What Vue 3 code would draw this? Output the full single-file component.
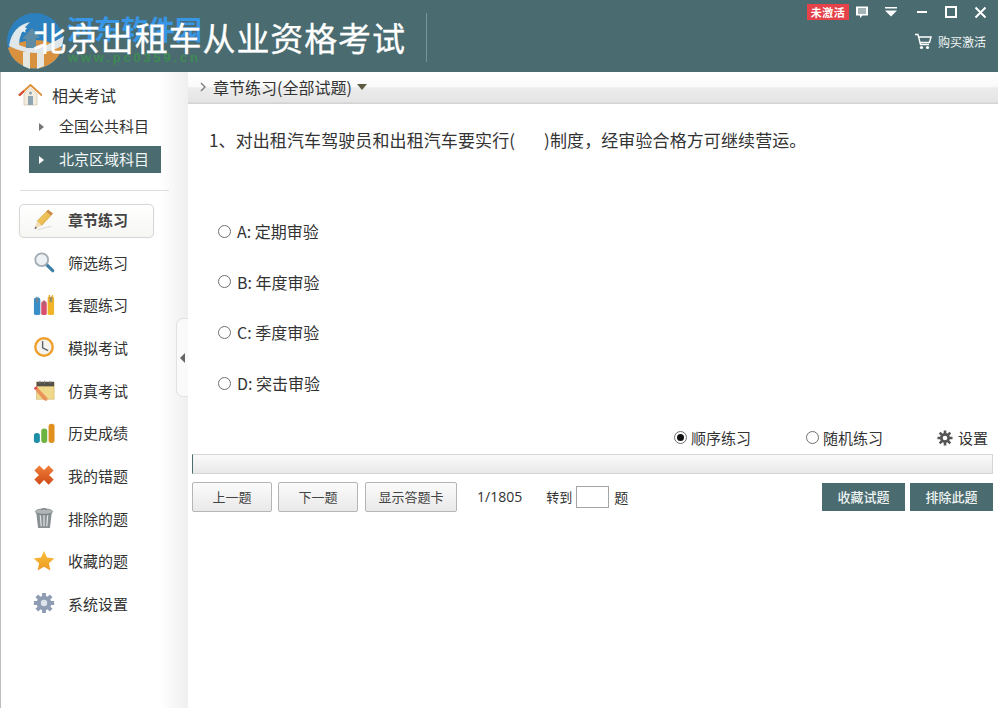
<script setup>
const subjects = [
  { name: '全国公共科目', active: false },
  { name: '北京区域科目', active: true }
]
const navItems = [
  { name: '章节练习', icon: 'pencil', active: true },
  { name: '筛选练习', icon: 'search' },
  { name: '套题练习', icon: 'books' },
  { name: '模拟考试', icon: 'clock' },
  { name: '仿真考试', icon: 'note' },
  { name: '历史成绩', icon: 'bars' },
  { name: '我的错题', icon: 'cross' },
  { name: '排除的题', icon: 'trash' },
  { name: '收藏的题', icon: 'star' },
  { name: '系统设置', icon: 'gear' }
]
const options = ['A: 定期审验', 'B: 年度审验', 'C: 季度审验', 'D: 突击审验']
</script>

<template>
  <div class="app">
    <header class="header">
      <div class="watermark">
        <svg class="wm-logo" width="58" height="58" viewBox="0 0 58 58">
          <circle cx="29" cy="29" r="28" fill="#2b80bd" />
          <path d="M2 36 Q29 20 56 36 A28 28 0 0 1 2 36Z" fill="#d8923f" />
          <path d="M17 40l7-1v18l-7-3zM31 38h7v16l-7 3z" fill="#e6e6e0" />
          <path d="M3 34 Q6 14 24 10 Q13 20 13 33 Q30 42 58 24 L56 34 Q30 48 3 34Z" fill="#dfe7ea" />
          <path d="M16 27 L26 16 L34 26 L30 26 L30 36 L20 36 L20 27Z" fill="#5f8ba3" />
          <path d="M17 13l1.500 2.500 2.700.5-2 2 .4 2.800-2.600-1.300-2.600 1.300.4-2.800-2-2 2.700-.5z" fill="#e8eef2" />
        </svg>
        <span class="wm-text">河东软件园</span>
        <span class="wm-url">www.pc0359.cn</span>
      </div>
      <h1 class="title">北京出租车从业资格考试</h1>
      <div class="title-sep"></div>
      <div class="spacer"></div>
      <div class="controls">
        <div class="ctrl-top">
          <span class="badge">未激活</span>
          <svg class="ctl c-msg" width="14" height="14" viewBox="0 0 14 14"><path d="M1 1.500h12v9H7.500L5 13v-2.500H1z" fill="#fff" /><path d="M3 4h8M3 6h8M3 8h8" stroke="#4a6b6f" stroke-width="1" /></svg>
          <svg class="ctl c-menu" width="14" height="12" viewBox="0 0 14 12"><path d="M1 1h12v1.500H1zM1 4.500h12L7 10.500z" fill="#fff" /></svg>
          <svg class="ctl c-min" width="12" height="12" viewBox="0 0 12 12"><path d="M1 6h10" stroke="#fff" stroke-width="2" /></svg>
          <svg class="ctl c-max" width="12" height="12" viewBox="0 0 12 12"><rect x="1" y="1" width="10" height="10" fill="none" stroke="#fff" stroke-width="2" /></svg>
          <svg class="ctl c-close" width="13" height="13" viewBox="0 0 13 13"><path d="M1.500 1.500l10 10M11.500 1.500l-10 10" stroke="#fff" stroke-width="2" /></svg>
        </div>
        <div class="buy">
          <svg width="18" height="17" viewBox="0 0 18 17"><path d="M1 1.500h3l2.500 10h8.500" fill="none" stroke="#fff" stroke-width="1.400" /><path d="M5 4h12l-1.500 5.500H6.200" fill="none" stroke="#fff" stroke-width="1.400" /><circle cx="7.500" cy="14.500" r="1.600" fill="#fff" /><circle cx="13.500" cy="14.500" r="1.600" fill="#fff" /></svg>
          <span>购买激活</span>
        </div>
      </div>
    </header>

    <div class="body">
      <aside class="sidebar">
        <div class="side-head">
          <svg width="24" height="22" viewBox="0 0 24 22">
            <path d="M6 10v11h13V10L12.500 4z" fill="#f3ede0" stroke="#c9b99a" stroke-width=".6" />
            <rect x="10" y="12" width="5" height="9" fill="#8fa5b3" />
            <circle cx="12.500" cy="9" r="1.500" fill="#8fa5b3" />
            <path d="M1 11.500L12.500 1 24 11.500" fill="none" stroke="#e0903a" stroke-width="2" />
            <path d="M1 11.500L6 7" fill="none" stroke="#d6452e" stroke-width="2" />
          </svg>
          <span>相关考试</span>
        </div>
        <ul class="subjects">
          <li v-for="s in subjects" :key="s.name" class="subject" :class="{ active: s.active }">
            <i class="tri"></i><span>{{ s.name }}</span>
          </li>
        </ul>
        <div class="side-sep"></div>
        <nav class="nav">
          <div v-for="n in navItems" :key="n.name" class="nav-item" :class="{ active: n.active }">
            <svg class="nav-icon" width="22" height="22" viewBox="0 0 24 24">
              <template v-if="n.icon === 'pencil'">
                <defs><linearGradient id="gp" x1="0" y1="0" x2="1" y2="1"><stop offset="0" stop-color="#f8d672" /><stop offset="1" stop-color="#e2a93a" /></linearGradient></defs>
                <path d="M4.500 13L16.500 1l5 4L9.500 18z" fill="url(#gp)" stroke="#c99a35" stroke-width=".6" />
                <path d="M16.500 1l5 4-2 2-5-4z" fill="#c98a50" />
                <path d="M4.500 13l5 5-8 4z" fill="#f2dfb8" />
                <path d="M1.500 22l2.800-1.400-1.400-1.400z" fill="#555" />
                <path d="M5 23q8-3 15-4" fill="none" stroke="#ddd" stroke-width="1.200" />
              </template>
              <template v-else-if="n.icon === 'search'">
                <path d="M14.500 14.500l7 7" stroke="#3d7fa8" stroke-width="3.500" stroke-linecap="round" />
                <circle cx="9.500" cy="9.500" r="7" fill="#eef1f3" stroke="#a3acb2" stroke-width="2" />
              </template>
              <template v-else-if="n.icon === 'books'">
                <path d="M1 6q0-2 2-2l0-1h1v1h1v-1h1v1q2 0 2 2v16q-3 2-7 0z" fill="#3a8fc9" />
                <path d="M9 10q0-2 2-2v-1h2v1q2 0 2 2v12q-3 2-6 0z" fill="#d9506e" />
                <path d="M16 5q0-2 1-2v-2h1.500v2h2V1H22v2q1 0 1 2v17q-3 2-7 0z" fill="#f0b429" />
                <path d="M3 4h3v5H3zM11 8h2v4h-2zM18 3h3v6h-3z" fill="#7d7d7d" opacity=".7" />
              </template>
              <template v-else-if="n.icon === 'clock'">
                <circle cx="12" cy="12" r="9.500" fill="#f6f3ee" stroke="#eea02c" stroke-width="2.600" />
                <path d="M10.500 5.500v7.500l6 3" fill="none" stroke="#5a6470" stroke-width="1.500" />
              </template>
              <template v-else-if="n.icon === 'note'">
                <rect x="4" y="4" width="19" height="18" fill="#f0d98a" stroke="#c9a95a" stroke-width=".6" />
                <rect x="4" y="3" width="19" height="5" fill="#55504a" />
                <path d="M7 2h1v3H7zM12 2h1v3h-1zM18 2h1v3h-1z" fill="#8a857c" />
                <path d="M1 10l2.500-2L16 21l-1 3-3.500-1z" fill="#e9935a" />
                <path d="M1 10l2.500-2 1.500 1.600-2.500 2z" fill="#d9405e" />
              </template>
              <template v-else-if="n.icon === 'bars'">
                <rect x="1" y="12" width="6.500" height="11" rx="3" fill="#1f8fa8" />
                <rect x="9" y="7" width="6.500" height="16" rx="3" fill="#6cb33f" />
                <rect x="17" y="2" width="6.500" height="21" rx="3" fill="#e0901f" />
              </template>
              <template v-else-if="n.icon === 'cross'">
                <defs><linearGradient id="gx" x1="0" y1="0" x2="0" y2="1"><stop offset="0" stop-color="#f08038" /><stop offset="1" stop-color="#cf4a18" /></linearGradient></defs>
                <path d="M7 1.500l5 5 5-5 5.500 5.500-5 5 5 5-5.500 5.500-5-5-5 5L1.500 17l5-5-5-5z" fill="url(#gx)" />
              </template>
              <template v-else-if="n.icon === 'trash'">
                <path d="M3.500 6h17l-2 17H5.500z" fill="#8a9194" />
                <path d="M8 9l1 12M12 9v12M16 9l-1 12" stroke="#e4e6e6" stroke-width="1.300" />
                <ellipse cx="12" cy="5" rx="9.500" ry="3" fill="#b0b5b7" stroke="#6f7577" stroke-width=".7" />
                <path d="M9 3q3-3 6 0" fill="none" stroke="#6f7577" stroke-width="1" />
              </template>
              <template v-else-if="n.icon === 'star'">
                <defs><linearGradient id="gs" x1="0" y1="0" x2="0" y2="1"><stop offset="0" stop-color="#f8c03a" /><stop offset="1" stop-color="#ee9a20" /></linearGradient></defs>
                <path d="M12 1l3.300 7.300 8 .9-6 5.300 1.700 7.900L12 18.400 5 22.400l1.700-7.900-6-5.300 8-.9z" fill="url(#gs)" />
              </template>
              <template v-else-if="n.icon === 'gear'">
                <circle cx="12" cy="12" r="8" fill="#8e9db3" />
                <path d="M12 1v22M1 12h22M4.200 4.200l15.600 15.600M19.800 4.200L4.200 19.800" stroke="#8e9db3" stroke-width="4.200" />
                <circle cx="12" cy="12" r="3.500" fill="#dfe4ea" />
              </template>
            </svg>
            <span>{{ n.name }}</span>
          </div>
        </nav>
      </aside>

      <main class="main">
        <div class="collapse"><i></i></div>
        <div class="crumb">
          <svg width="8" height="10" viewBox="0 0 8 10"><path d="M2 1l4 4-4 4" fill="none" stroke="#777" stroke-width="1.300" /></svg>
          <span>章节练习(全部试题)</span>
          <i class="crumb-tri"></i>
        </div>
        <div class="content">
          <p class="question">1、对出租汽车驾驶员和出租汽车要实行(<span class="blank"></span>)制度，经审验合格方可继续营运。</p>
          <div class="options">
            <label v-for="o in options" :key="o" class="option"><i class="radio"></i>{{ o }}</label>
          </div>
          <div class="mode">
            <span class="mode-item m-seq"><i class="radio on"></i>顺序练习</span>
            <span class="mode-item m-rand"><i class="radio"></i>随机练习</span>
            <span class="mode-item m-set">
              <svg width="16" height="16" viewBox="0 0 16 16"><circle cx="8" cy="8" r="5" fill="#555" /><path d="M8 .5v15M.5 8h15M2.700 2.700l10.600 10.600M13.300 2.700L2.700 13.300" stroke="#555" stroke-width="2.600" /><circle cx="8" cy="8" r="2.300" fill="#fff" /></svg>
              设置
            </span>
          </div>
          <div class="progress"></div>
          <div class="actions">
            <button class="btn b-nav">上一题</button>
            <button class="btn b-nav">下一题</button>
            <button class="btn b-card">显示答题卡</button>
            <span class="count">1/1805</span>
            <span class="goto">转到</span>
            <input class="goto-input" />
            <span class="goto-end">题</span>
            <div class="spacer"></div>
            <button class="dark">收藏试题</button>
            <button class="dark">排除此题</button>
          </div>
        </div>
      </main>
    </div>
  </div>
</template>

<style>
html, body { margin: 0; padding: 0; background: #fff; overflow: hidden; }
</style>

<style scoped>
.app {
  width: 998px;
  height: 708px;
  display: flex;
  flex-direction: column;
  font-family: "Noto Sans CJK SC", "Open Sans", sans-serif;
  color: #333;
  background: #fff;
  overflow: hidden;
}
i { display: block; font-style: normal; }
.spacer { flex: 1; }

.header {
  height: 72px;
  flex: none;
  background: #4a6b6f;
  display: flex;
  position: relative;
  overflow: hidden;
}
.title {
  margin: 0 0 0 33px;
  padding-top: 14px;
  font-size: 33px;
  line-height: 46px;
  font-weight: 400;
  letter-spacing: .9px;
  color: #fff;
  white-space: nowrap;
  position: relative;
  -webkit-text-stroke: .3px #fff;
}
.title-sep {
  width: 1px;
  height: 49px;
  margin: 13px 0 0 20px;
  background: #7b9497;
}
.watermark { position: absolute; left: 0; top: 0; width: 210px; height: 72px; }
.wm-logo { position: absolute; left: 6px; top: 12px; }
.wm-text {
  position: absolute;
  left: 67px;
  top: 11px;
  font-size: 27px;
  line-height: 36px;
  font-weight: 700;
  color: #3796e6;
  white-space: nowrap;
}
.wm-url {
  position: absolute;
  left: 68px;
  top: 51px;
  font-family: "Liberation Sans", sans-serif;
  font-size: 13px;
  line-height: 14px;
  font-weight: 700;
  letter-spacing: 2.8px;
  color: #3f8a55;
  white-space: nowrap;
}
.controls { width: 192px; display: flex; flex-direction: column; flex: none; }
.ctrl-top { display: flex; align-items: center; height: 24px; }
.badge {
  width: 42px;
  height: 16px;
  margin-left: 1px;
  background: #e5424a;
  color: #fff;
  font-size: 11px;
  font-weight: 700;
  line-height: 16px;
  text-align: center;
  letter-spacing: .5px;
}
.ctl { flex: none; }
.c-msg { margin-left: 6px; }
.c-menu { margin-left: 15px; }
.c-min { margin-left: 18px; }
.c-max { margin-left: 17px; }
.c-close { margin-left: 17px; }
.buy {
  display: flex;
  align-items: center;
  margin: 8px 0 0 108px;
  height: 18px;
  gap: 6px;
  color: #f2f6f6;
  font-size: 12px;
  white-space: nowrap;
}

.body { flex: 1; display: flex; min-height: 0; }
.sidebar {
  width: 188px;
  flex: none;
  box-sizing: border-box;
  border-left: 1px solid #bdbdbd;
  background: linear-gradient(to right, #fff 85%, #efefef 100%);
  padding-top: 11px;
}
.side-head {
  display: flex;
  align-items: center;
  height: 24px;
  padding-left: 17px;
  gap: 10px;
  font-size: 16px;
  color: #333;
}
.subjects { list-style: none; margin: 6px 0 0 28px; padding: 0; width: 132px; }
.subject {
  height: 27px;
  display: flex;
  align-items: center;
  font-size: 15px;
  line-height: 27px;
  color: #333;
  margin-bottom: 6px;
  white-space: nowrap;
}
.subject span { position: relative; top: -1px; }
.subject.active { background: #4a6b6f; color: #f4f7f7; }
.tri {
  width: 0;
  height: 0;
  margin: 0 15px 0 10px;
  border-left: 5px solid #777;
  border-top: 4.500px solid transparent;
  border-bottom: 4.500px solid transparent;
}
.subject.active .tri { border-left-color: #fff; }
.side-sep { height: 1px; background: #ddd; margin: 17px 19px 0 19px; }
.nav { margin: 13px 0 0 18px; }
.nav-item {
  box-sizing: border-box;
  width: 135px;
  height: 34px;
  margin-bottom: 8.670px;
  display: flex;
  align-items: center;
  padding: 0 0 3px 13px;
  gap: 13px;
  font-size: 15px;
  color: #333;
  border: 1px solid transparent;
  white-space: nowrap;
}
.nav-item.active {
  border-color: #d5d8d5;
  border-radius: 5px;
  background: linear-gradient(#fff, #f6f6f3);
  box-shadow: 0 0 1px #ddd;
  font-weight: 700;
  color: #444;
}
.nav-icon { flex: none; width: 22px; height: 22px; }

.main { flex: 1; min-width: 0; position: relative; display: flex; flex-direction: column; }
.collapse {
  position: absolute;
  left: -12px;
  top: 246px;
  width: 12px;
  height: 79px;
  box-sizing: border-box;
  border: 1px solid #e2e2e2;
  border-right: none;
  border-radius: 7px 0 0 7px;
  background: #fafafa;
  display: flex;
  align-items: center;
  justify-content: center;
}
.collapse i {
  width: 0;
  height: 0;
  border-right: 5px solid #666;
  border-top: 5px solid transparent;
  border-bottom: 5px solid transparent;
}
.crumb {
  height: 32px;
  flex: none;
  box-sizing: border-box;
  display: flex;
  align-items: center;
  padding: 0 0 3px 11px;
  gap: 6px;
  font-size: 16px;
  color: #333;
  background: linear-gradient(#fff 0, #fafafa 45%, #ececec 50%, #e5e5e5 92%, #cfcfcf 100%);
}
.crumb span { white-space: nowrap; }
.crumb-tri {
  width: 0;
  height: 0;
  margin-left: -1px;
  border-top: 6px solid #5e5a42;
  border-left: 5.500px solid transparent;
  border-right: 5.500px solid transparent;
}
.content { flex: 1; padding: 0 5px 0 4px; }
.question {
  margin: 23px 0 0 17px;
  font-size: 17px;
  line-height: 26px;
  letter-spacing: .1px;
  color: #333;
  white-space: nowrap;
}
.blank { display: inline-block; width: 29px; }
.options { margin: 66px 0 0 26px; }
.option {
  display: flex;
  align-items: center;
  height: 24px;
  margin-bottom: 26.700px;
  font-size: 16px;
  color: #333;
  gap: 6px;
  white-space: nowrap;
}
.radio {
  width: 13px;
  height: 13px;
  box-sizing: border-box;
  border: 1px solid #6f6f6f;
  border-radius: 50%;
  background: #fff;
  flex: none;
  position: relative;
}
.radio.on::after {
  content: "";
  position: absolute;
  left: 2px;
  top: 2px;
  width: 7px;
  height: 7px;
  border-radius: 50%;
  background: #111;
}
.mode { display: flex; align-items: center; height: 20px; margin-top: 32.700px; font-size: 15px; color: #333; }
.mode-item { display: flex; align-items: center; gap: 4px; white-space: nowrap; }
.m-seq { margin-left: 482px; }
.m-rand { margin-left: 55px; }
.m-set { margin-left: 54px; gap: 5px; }
.progress {
  height: 20px;
  margin-top: 6px;
  box-sizing: border-box;
  border: 1px solid #d6d6d6;
  border-left: 1px solid #4a6b6f;
  background: linear-gradient(#fafafa, #e8e8e8);
}
.actions { display: flex; align-items: center; height: 30px; margin-top: 8px; font-size: 13px; color: #333; }
.btn {
  height: 30px;
  padding: 0;
  box-sizing: border-box;
  border: 1px solid #b5b5b5;
  border-radius: 2px;
  background: linear-gradient(#fbfbfb, #e9e9e9);
  font: inherit;
  color: #444;
  margin-right: 6px;
}
.b-nav { width: 80px; }
.b-card { width: 92px; margin-left: 1px; margin-right: 0; }
.count { margin-left: 20px; font-family: "Open Sans", sans-serif; font-size: 14px; }
.goto { margin-left: 24px; }
.goto-input {
  width: 33px;
  height: 22px;
  margin-left: 4px;
  padding: 0;
  box-sizing: border-box;
  border: 1px solid #a5a5a5;
  background: #fff;
  outline: none;
}
.goto-end { margin-left: 5px; font-size: 14px; }
.dark {
  width: 83px;
  height: 28px;
  margin-left: 5px;
  padding: 0;
  border: none;
  background: #4a6b6f;
  color: #eef3f3;
  font: inherit;
  font-weight: 500;
}
</style>
